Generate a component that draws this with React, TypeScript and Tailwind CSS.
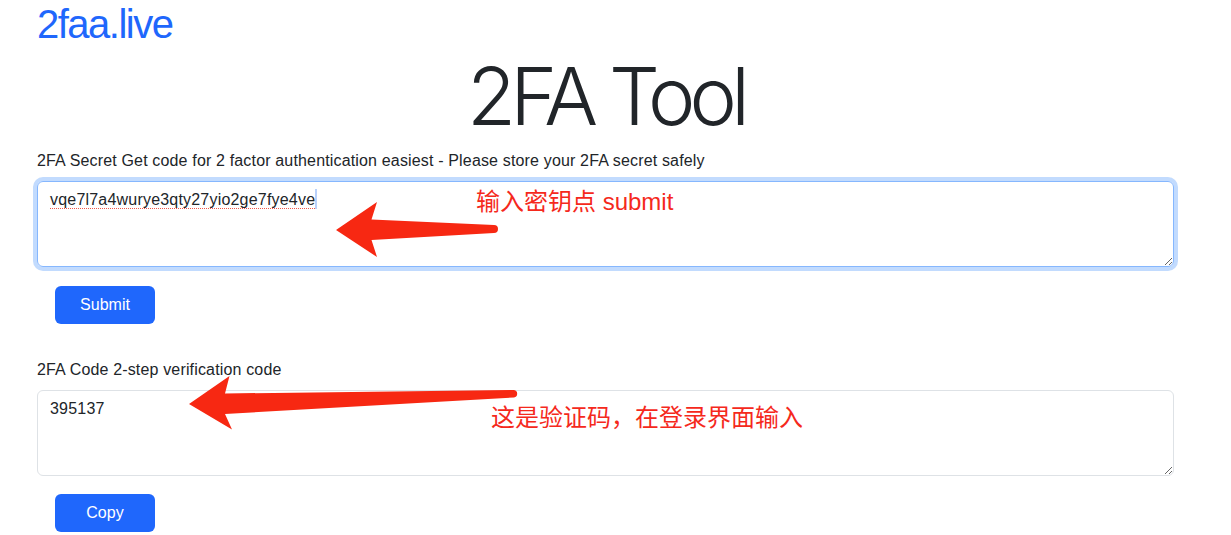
export default function App() {
  return (
    <div className="relative min-h-[535px] bg-white font-['Liberation_Sans','Noto_Sans_CJK_SC',sans-serif] text-[#212529]">
      <div className="pl-[37px] pr-[57px]">
        <div className="text-[40px] leading-[48px] tracking-[-1.5px] text-[#1f67fc]">2faa.live</div>
        <h1 className="text-center font-['Inter',sans-serif] text-[80px] font-light leading-[96px] tracking-[-5.8px]">
          2FA Tool
        </h1>

        <label className="mt-[5px] mb-2 block text-base leading-6 tracking-[0.16px]">
          2FA Secret Get code for 2 factor authentication easiest - Please store your 2FA secret safely
        </label>
        <div className="relative">
          <textarea
            rows={3}
            spellCheck={false}
            defaultValue="vqe7l7a4wurye3qty27yio2ge7fye4ve"
            className="block h-[86px] w-full rounded-md border border-[#86b7fe] px-3 py-1.5 text-base leading-6 tracking-[0.2px] outline-none ring-4 ring-[#0d6efd]/25"
          />
          {/* spellcheck squiggle + caret */}
          <div className="pointer-events-none absolute left-[13px] top-[7px] flex items-center text-base leading-6 tracking-[0.2px]">
            <span className="border-b border-dotted border-[#f0564a] leading-[20px] text-transparent">
              vqe7l7a4wurye3qty27yio2ge7fye4ve
            </span>
            <span className="h-[20px] w-[2px] bg-[#b9d1fb]" />
          </div>
        </div>
        <div className="mt-[19px] pl-[18px]">
          <button className="h-[38px] w-[100px] rounded-md bg-[#1f67fc] text-base text-white">Submit</button>
        </div>

        <label className="mt-[34px] mb-2 block text-base leading-6 tracking-[0.16px]">
          2FA Code 2-step verification code
        </label>
        <textarea
          rows={3}
          readOnly
          defaultValue="395137"
          className="block h-[86px] w-full rounded-md border border-[#dee2e6] px-3 py-1.5 text-base leading-6 tracking-[0.2px] outline-none"
        />
        <div className="mt-[18px] pl-[18px]">
          <button className="h-[38px] w-[100px] rounded-md bg-[#1f67fc] text-base text-white">Copy</button>
        </div>
      </div>

      {/* annotations */}
      <svg className="pointer-events-none absolute left-0 top-0" width="1231" height="535">
        <path
          d="M336 230 L377 202 L371.5 219.5 L494 225 A4 4 0 0 1 494 233 L371.5 240 L377 257 Z"
          fill="#f72812"
        />
        <path
          d="M189 404 L229.5 376 L225 393.5 L514 390 A3.8 3.8 0 0 1 514 397.5 L225 414 L232 429.5 Z"
          fill="#f72812"
        />
      </svg>
      <div className="absolute left-[476px] top-[186px] text-[24px] leading-8 text-[#f5291c]">输入密钥点 submit</div>
      <div className="absolute left-[491px] top-[402px] text-[24px] leading-8 text-[#f5291c]">这是验证码，在登录界面输入</div>
    </div>
  );
}
